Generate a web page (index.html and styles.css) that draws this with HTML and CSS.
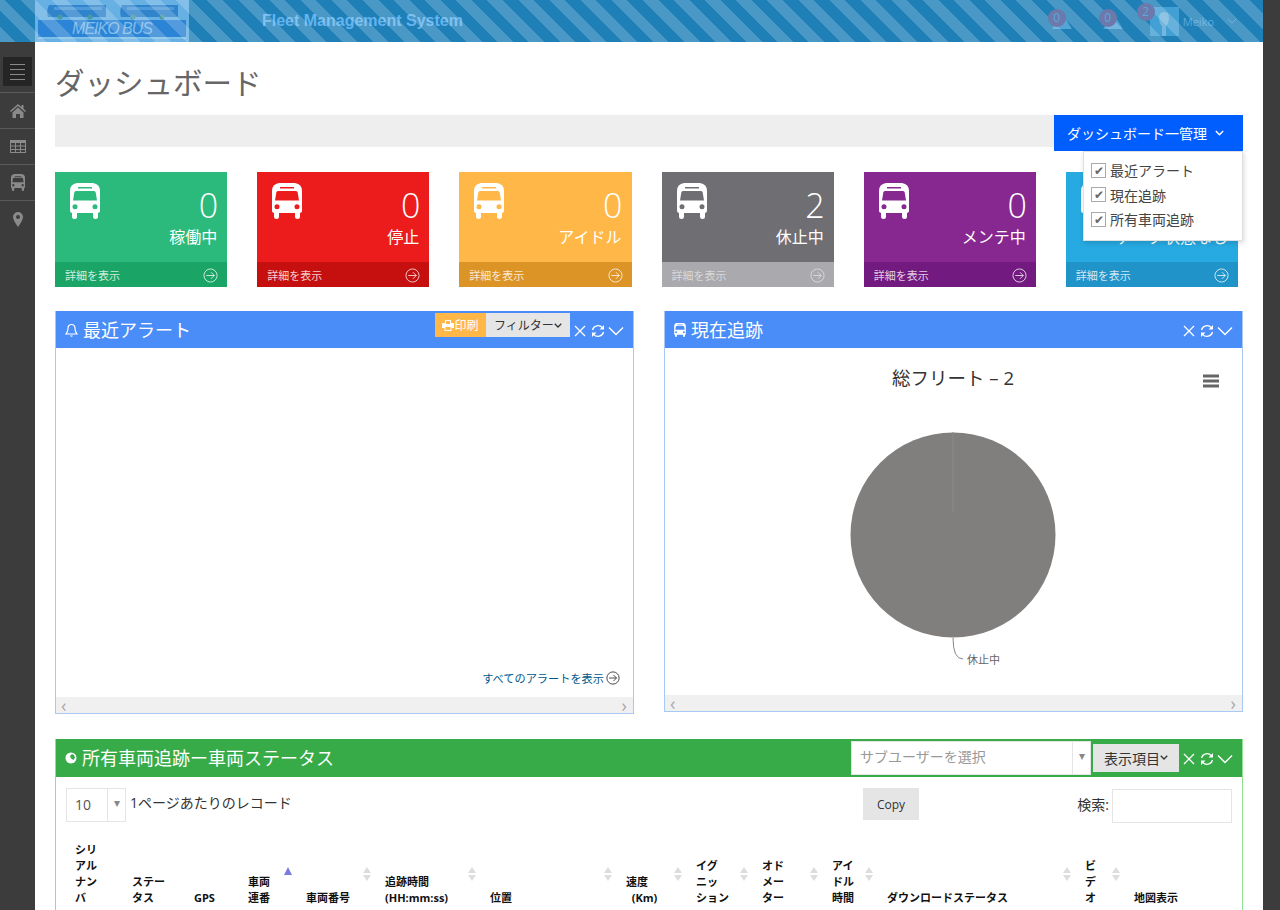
FILE: index.html
```html
<!DOCTYPE html>
<html lang="ja">
<head>
  <meta charset="UTF-8" />
  <title>Fleet Management System</title>
  <link rel="stylesheet" href="styles.css">
</head>
<body>
  <!-- shared icons -->
  <svg class="icon-defs" width="0" height="0">
    <symbol id="i-bus" viewBox="0 0 30 36">
      <path fill-rule="evenodd" d="M7 0h16q7 1 7 8v20q0 1.5-2 2v3.5a2.5 2.5 0 0 1-5 0V30H7v3.5a2.5 2.5 0 0 1-5 0V30q-2-.5-2-2V8q0-7 7-8zM8 4v1.5h14V4zM6 8q-1.500 0-1.700 1.500L3 17.500h24l-1.300-8Q25.500 8 24 8zM5 21.300a2.500 2.500 0 1 0 0 5 2.500 2.500 0 0 0 0-5zM25 21.300a2.500 2.500 0 1 0 0 5 2.500 2.500 0 0 0 0-5z"/>
    </symbol>
    <symbol id="i-go" viewBox="0 0 16 16">
      <circle cx="8" cy="8" r="7" fill="none" stroke="currentColor"/>
      <path d="M3.500 8h8.500M8.500 4.500 12 8l-3.500 3.500" fill="none" stroke="currentColor"/>
    </symbol>
    <symbol id="i-close" viewBox="0 0 14 14">
      <path d="M2 2l10 10M12 2 2 12" fill="none" stroke="currentColor" stroke-width="1.300"/>
    </symbol>
    <symbol id="i-sync" viewBox="0 0 14 14">
      <path d="M1.500 6a5.600 5.600 0 0 1 9.800-2.300M12.500 8a5.600 5.600 0 0 1-9.800 2.300" fill="none" stroke="currentColor" stroke-width="1.300"/>
      <path d="M13 1v4.500H8.500zM1 13V8.500h4.500z" fill="currentColor"/>
    </symbol>
    <symbol id="i-down" viewBox="0 0 16 10">
      <path d="M1 1.500l7 7 7-7" fill="none" stroke="currentColor" stroke-width="1.400"/>
    </symbol>
    <symbol id="i-caret" viewBox="0 0 16 10">
      <path d="M1.500 1.500 8 8l6.500-6.500" fill="none" stroke="currentColor" stroke-width="2.600"/>
    </symbol>
  </svg>

  <header class="topbar">
    <div class="logo">
      <div class="logo-buses">
        <svg width="62" height="16" viewBox="0 0 62 16"><path d="M3 1h57v12H2q-2-6 1-12z" fill="#2f84cc"/><path d="M8 3h48v3H8z" fill="#4f9ad8"/><circle cx="14" cy="13" r="2.500" fill="#4a9a9f"/><circle cx="44" cy="13" r="2.500" fill="#4a9a9f"/></svg>
        <svg width="60" height="16" viewBox="0 0 60 16"><path d="M3 1h56v12H2q-2-6 1-12z" fill="#2f84cc"/><path d="M8 3h47v3H8z" fill="#4f9ad8"/><circle cx="14" cy="13" r="2.500" fill="#4a9a9f"/><circle cx="43" cy="13" r="2.500" fill="#4a9a9f"/></svg>
      </div>
      <div class="logo-band">MEIKO BUS</div>
    </div>
    <div class="system-name">Fleet Management System</div>
    <div class="top-right">
      <div class="notify">
        <span class="badge">0</span>
        <svg width="22" height="18" viewBox="0 0 24 20"><path d="M12 1 23 19H1z" fill="#52a5d6"/></svg>
      </div>
      <div class="notify">
        <span class="badge">0</span>
        <svg width="22" height="18" viewBox="0 0 24 20"><path d="M12 1 23 19H1z" fill="#52a5d6"/></svg>
      </div>
      <div class="user">
        <span class="badge badge-user">2</span>
        <div class="avatar">
          <svg width="14" height="24" viewBox="0 0 14 24"><path d="M7 0q5 0 5 6 0 5-3 8v10H5V14Q2 11 2 6q0-6 5-6z" fill="#76b6dc"/></svg>
        </div>
        <span class="user-name">Meiko</span>
        <svg class="user-caret" width="10" height="6"><use href="#i-down"/></svg>
      </div>
    </div>
  </header>

  <div class="layout">
    <nav class="sidebar">
      <div class="side-toggle-row">
        <div class="side-toggle"><span></span><span></span><span></span><span></span></div>
      </div>
      <div class="side-item">
        <svg width="16" height="14" viewBox="0 0 16 14"><path d="M8 0 0 7l1 1 7-6 7 6 1-1-2.500-2.200V1h-2v2zM2.500 8.500V14H6v-4h4v4h3.500V8.500L8 3.500z" fill="#8a8a8a"/></svg>
      </div>
      <div class="side-item">
        <svg width="16" height="13" viewBox="0 0 16 13"><path fill-rule="evenodd" d="M0 0h16v13H0zM1 3v2.500h4V3zm5 0v2.500h4V3zm5 0v2.500h4V3zM1 6.500V9h4V6.500zm5 0V9h4V6.500zm5 0V9h4V6.500zM1 10v2h4v-2zm5 0v2h4v-2zm5 0v2h4v-2z" fill="#8a8a8a"/></svg>
      </div>
      <div class="side-item">
        <svg class="side-bus" width="14" height="17"><use href="#i-bus"/></svg>
      </div>
      <div class="side-item">
        <svg width="10" height="15" viewBox="0 0 10 15"><path fill-rule="evenodd" d="M5 0a5 5 0 0 1 5 5q0 3-5 10Q0 8 0 5a5 5 0 0 1 5-5zm0 3a2 2 0 1 0 0 4 2 2 0 0 0 0-4z" fill="#8a8a8a"/></svg>
      </div>
    </nav>

    <main class="content">
      <h1 class="page-title">ダッシュボード</h1>

      <div class="toolbar">
        <div class="manage-wrap">
          <button class="manage-btn">ダッシュボード一管理
            <svg width="9" height="6"><use href="#i-caret"/></svg>
          </button>
          <div class="manage-menu">
            <label class="menu-row"><span class="check">✔</span>最近アラート</label>
            <label class="menu-row"><span class="check">✔</span>現在追跡</label>
            <label class="menu-row"><span class="check">✔</span>所有車両追跡</label>
          </div>
        </div>
      </div>

      <section class="stats">
        <div class="stat stat-green">
          <div class="stat-main">
            <svg class="stat-bus" width="30" height="36"><use href="#i-bus"/></svg>
            <div class="stat-text"><div class="stat-num">0</div><div class="stat-label">稼働中</div></div>
          </div>
          <div class="stat-foot"><span>詳細を表示</span><svg width="15" height="15"><use href="#i-go"/></svg></div>
        </div>
        <div class="stat stat-red">
          <div class="stat-main">
            <svg class="stat-bus" width="30" height="36"><use href="#i-bus"/></svg>
            <div class="stat-text"><div class="stat-num">0</div><div class="stat-label">停止</div></div>
          </div>
          <div class="stat-foot"><span>詳細を表示</span><svg width="15" height="15"><use href="#i-go"/></svg></div>
        </div>
        <div class="stat stat-orange">
          <div class="stat-main">
            <svg class="stat-bus" width="30" height="36"><use href="#i-bus"/></svg>
            <div class="stat-text"><div class="stat-num">0</div><div class="stat-label">アイドル</div></div>
          </div>
          <div class="stat-foot"><span>詳細を表示</span><svg width="15" height="15"><use href="#i-go"/></svg></div>
        </div>
        <div class="stat stat-gray">
          <div class="stat-main">
            <svg class="stat-bus" width="30" height="36"><use href="#i-bus"/></svg>
            <div class="stat-text"><div class="stat-num">2</div><div class="stat-label">休止中</div></div>
          </div>
          <div class="stat-foot"><span>詳細を表示</span><svg width="15" height="15"><use href="#i-go"/></svg></div>
        </div>
        <div class="stat stat-purple">
          <div class="stat-main">
            <svg class="stat-bus" width="30" height="36"><use href="#i-bus"/></svg>
            <div class="stat-text"><div class="stat-num">0</div><div class="stat-label">メンテ中</div></div>
          </div>
          <div class="stat-foot"><span>詳細を表示</span><svg width="15" height="15"><use href="#i-go"/></svg></div>
        </div>
        <div class="stat stat-blue">
          <div class="stat-main">
            <svg class="stat-bus" width="30" height="36"><use href="#i-bus"/></svg>
            <div class="stat-text"><div class="stat-num">0</div><div class="stat-label">データ状態なし</div></div>
          </div>
          <div class="stat-foot"><span>詳細を表示</span><svg width="15" height="15"><use href="#i-go"/></svg></div>
        </div>
      </section>

      <section class="panel-row">
        <div class="panel panel-blue panel-alerts">
          <div class="panel-head">
            <svg class="head-icon" width="13" height="14" viewBox="0 0 13 14"><path d="M6.500 1.500q3.500 0 3.500 4 0 3 2 5.500H1q2-2.500 2-5.500 0-4 3.500-4z" fill="none" stroke="#fff" stroke-width="1.200"/><path d="M5 12.500h3q-.5 1.200-1.500 1.200T5 12.500z" fill="#fff"/></svg>
            <span class="panel-title">最近アラート</span>
            <div class="head-tools">
              <button class="btn-print">
                <svg width="12" height="11" viewBox="0 0 12 11"><path fill-rule="evenodd" d="M3 0h6v3h2q1 0 1 1v4H9.500v3h-7V8H0V4q0-1 1-1h2zm1 1v3h4V1zM3.500 7v3h5V7z" fill="#fff"/></svg>印刷</button>
              <button class="btn-gray btn-filter">フィルター<svg width="8" height="5"><use href="#i-caret"/></svg></button>
            </div>
            <div class="head-icons">
              <svg width="14" height="14"><use href="#i-close"/></svg>
              <svg width="14" height="14"><use href="#i-sync"/></svg>
              <svg width="16" height="10"><use href="#i-down"/></svg>
            </div>
          </div>
          <div class="panel-body alerts-body">
            <a class="all-alerts">すべてのアラートを表示<svg width="14" height="14"><use href="#i-go"/></svg></a>
          </div>
          <div class="hscroll"><span>‹</span><span>›</span></div>
        </div>

        <div class="panel panel-blue panel-track">
          <div class="panel-head">
            <svg class="head-icon" width="12" height="14"><use href="#i-bus"/></svg>
            <span class="panel-title">現在追跡</span>
            <div class="head-icons">
              <svg width="14" height="14"><use href="#i-close"/></svg>
              <svg width="14" height="14"><use href="#i-sync"/></svg>
              <svg width="16" height="10"><use href="#i-down"/></svg>
            </div>
          </div>
          <div class="panel-body chart-body">
            <svg class="pie" width="576" height="345" viewBox="0 0 576 345">
              <text x="288" y="37" text-anchor="middle" class="pie-title">総フリート – 2</text>
              <path d="M538 28h16M538 33h16M538 38h16" stroke="#666" stroke-width="3"/>
              <circle cx="288" cy="187" r="102.500" fill="#807f7d"/>
              <path d="M288 84v80" stroke="#8c8b89" stroke-width="1"/>
              <path d="M288 290q0 21 10 21" fill="none" stroke="#888"/>
              <text x="302" y="316" class="pie-label">休止中</text>
            </svg>
          </div>
          <div class="hscroll"><span>‹</span><span>›</span></div>
        </div>
      </section>

      <section class="panel panel-green">
        <div class="panel-head">
          <svg class="head-icon" width="12" height="12" viewBox="0 0 12 12"><path fill-rule="evenodd" d="M6 .5a5.500 5.500 0 1 1 0 11 5.500 5.500 0 0 1 0-11zM7 2 5 4l1 2.500L8.500 8 10 5.500 9 3z" fill="#fff"/></svg>
          <span class="panel-title">所有車両追跡ー車両ステータス</span>
          <div class="head-tools tools-fleet">
            <div class="subuser"><span class="subuser-text">サブユーザーを選択</span><span class="select-arrow">▾</span></div>
            <button class="btn-gray btn-columns">表示項目<svg width="8" height="5"><use href="#i-caret"/></svg></button>
          </div>
          <div class="head-icons">
            <svg width="14" height="14"><use href="#i-close"/></svg>
            <svg width="14" height="14"><use href="#i-sync"/></svg>
            <svg width="16" height="10"><use href="#i-down"/></svg>
          </div>
        </div>
        <div class="fleet-body">
          <div class="table-controls">
            <div class="length">
              <div class="length-select"><span class="length-val">10</span><span class="select-arrow">▾</span></div>
              <span>1ページあたりのレコード</span>
            </div>
            <button class="btn-copy">Copy</button>
            <div class="search"><span>検索:</span><div class="search-box"></div></div>
          </div>
          <table class="fleet-table">
            <colgroup>
              <col><col><col><col><col><col><col><col><col><col><col><col><col><col>
            </colgroup>
            <thead>
              <tr>
                <th>シリ<br>アル<br>ナン<br>バ</th>
                <th>ステー<br>タス</th>
                <th>GPS</th>
                <th class="sort sort-asc">車両<br>連番</th>
                <th class="sort">車両番号</th>
                <th class="sort">追跡時間<br>(HH:mm:ss)</th>
                <th class="sort">位置</th>
                <th class="sort">速度<br>&nbsp;&nbsp;(Km)</th>
                <th class="sort">イグ<br>ニッ<br>ション</th>
                <th class="sort">オド<br>メー<br>ター</th>
                <th class="sort">アイ<br>ドル<br>時間</th>
                <th class="sort">ダウンロードステータス</th>
                <th class="sort">ビ<br>デ<br>オ</th>
                <th>地図表示</th>
              </tr>
            </thead>
          </table>
        </div>
      </section>
    </main>
  </div>
</body>
</html>
```

FILE: styles.css
```css
* {
  box-sizing: border-box;
}

html, body {
  height: 910px;
  overflow: hidden;
}

body {
  margin: 0;
  padding-right: 17px;
  background-color: #3c3c3c;
  font-family: "Open Sans", "Noto Sans CJK JP", sans-serif;
  font-size: 14px;
  color: #333;
}

.icon-defs {
  position: absolute;
}

button {
  font-family: inherit;
  border: none;
  cursor: pointer;
}

/* top bar, greyed by a striped loading layer */
.topbar {
  position: relative;
  display: flex;
  align-items: center;
  height: 42px;
  padding-left: 35px;
  background-color: #1f80b8;
}

.topbar::after {
  content: "";
  position: absolute;
  inset: 0;
  background: repeating-linear-gradient(45deg, rgba(255, 255, 255, 0.19) 0 11px, transparent 11px 22px);
}

.logo {
  width: 154px;
  height: 42px;
  padding: 4px 3px 0;
  background-color: #67b0e4;
}

.logo-buses {
  display: flex;
  justify-content: space-between;
  height: 16px;
  padding: 0 7px 0 8px;
}

.logo-band {
  height: 19px;
  border-bottom: 2px solid #7ec0e8;
  background-color: #2c84d6;
  color: #7fbdea;
  font-family: "Liberation Sans", sans-serif;
  font-size: 16px;
  font-style: italic;
  letter-spacing: -1px;
  line-height: 17px;
  text-align: center;
}

.system-name {
  margin-left: 73px;
  color: #63b4ee;
  font-family: "Liberation Sans", sans-serif;
  font-size: 16px;
  font-weight: bold;
}

.top-right {
  display: flex;
  align-items: center;
  margin-left: auto;
  padding-right: 26px;
  gap: 24px;
}

.notify {
  position: relative;
  width: 27px;
  height: 42px;
  padding: 12px 0 0 3px;
}

.badge {
  position: absolute;
  top: 9px;
  left: 0;
  width: 18px;
  height: 18px;
  border-radius: 50%;
  background-color: #6d78ab;
  color: #5aa8dc;
  font-size: 12px;
  line-height: 18px;
  text-align: center;
  z-index: 1;
}

.badge-user {
  top: 3px;
  left: -13px;
}

.user {
  position: relative;
  display: flex;
  align-items: center;
  height: 42px;
}

.avatar {
  display: flex;
  align-items: flex-end;
  justify-content: center;
  width: 29px;
  height: 29px;
  background-color: #42a0d4;
}

.user-name {
  margin-left: 4px;
  color: #5aa8dc;
  font-size: 11px;
}

.user-caret {
  margin-left: 13px;
  color: #5aa8dc;
}

.layout {
  display: flex;
  height: 868px;
}

/* left icon rail */
.sidebar {
  flex: 0 0 35px;
  background-color: #3c3c3c;
}

.side-toggle-row {
  height: 51px;
  padding: 15px 3px 0;
  border-bottom: 1px solid #5a5a5a;
}

.side-toggle {
  display: flex;
  flex-direction: column;
  justify-content: center;
  gap: 4px;
  height: 29px;
  padding: 0 7px;
  background-color: #252525;
}

.side-toggle span {
  height: 1px;
  background-color: #8a8a8a;
}

.side-item {
  display: flex;
  align-items: center;
  justify-content: center;
  height: 36px;
  border-bottom: 1px solid #5a5a5a;
}

.side-item:last-child {
  border-bottom: none;
}

.side-bus {
  fill: #8a8a8a;
}

.content {
  flex: 1;
  padding: 0 20px;
  background-color: #fff;
  overflow: hidden;
}

.page-title {
  height: 73px;
  margin: 0;
  padding-top: 20px;
  color: #666;
  font-size: 29.500px;
  font-weight: 400;
  line-height: 42px;
}

.toolbar {
  display: flex;
  justify-content: flex-end;
  height: 32px;
  background-color: #eee;
}

.manage-wrap {
  position: relative;
  z-index: 2;
}

.manage-btn {
  display: flex;
  align-items: center;
  gap: 7px;
  width: 189px;
  height: 36px;
  padding: 0 0 0 13px;
  background-color: #005eff;
  color: #fff;
  font-size: 14px;
}

.manage-btn svg {
  margin-left: 1px;
}

.manage-menu {
  position: absolute;
  top: 36px;
  right: 0;
  width: 160px;
  height: 90px;
  padding: 6px 0 0 7px;
  background-color: #fff;
  border: 1px solid #e0e0e0;
  box-shadow: 1px 2px 5px rgba(0, 0, 0, 0.15);
}

.menu-row {
  display: flex;
  align-items: center;
  height: 24.500px;
  color: #444;
  font-size: 14px;
}

.check {
  width: 15px;
  height: 15px;
  margin-right: 4px;
  border: 1px solid #aaa;
  color: #666;
  font-size: 12px;
  line-height: 13px;
  text-align: center;
}

/* status cards */
.stats {
  display: grid;
  grid-template-columns: repeat(6, 1fr);
  gap: 30px;
  margin-top: 25px;
  padding-right: 5px;
}

.stat {
  height: 115px;
  color: #fff;
}

.stat-main {
  display: flex;
  justify-content: space-between;
  height: 90px;
  padding: 11px 10px 0 15px;
}

.stat-bus {
  fill: #fff;
}

.stat-text {
  text-align: right;
}

.stat-num {
  height: 42px;
  margin-right: -1px;
  font-size: 34px;
  font-weight: 300;
  line-height: 44px;
}

.stat-label {
  font-size: 16px;
  line-height: 24px;
  white-space: nowrap;
}

.stat-foot {
  display: flex;
  align-items: center;
  justify-content: space-between;
  height: 25px;
  padding: 1px 9px 0 10px;
  font-size: 11px;
  color: rgba(255, 255, 255, 0.8);
}

.stat-green { background-color: #2bba7b; }
.stat-green .stat-foot { background-color: #1aa567; }
.stat-red { background-color: #ec1c1c; }
.stat-red .stat-foot { background-color: #c60f0f; }
.stat-orange { background-color: #ffb848; }
.stat-orange .stat-foot { background-color: #dd9426; }
.stat-gray { background-color: #6f6e72; }
.stat-gray .stat-foot { background-color: #aaa9ad; color: rgba(255, 255, 255, 0.55); }
.stat-purple { background-color: #86288f; }
.stat-purple .stat-foot { background-color: #721a80; }
.stat-blue { background-color: #27a9e1; }
.stat-blue .stat-foot { background-color: #2093c8; }

/* panels */
.panel-row {
  display: flex;
  align-items: flex-start;
  gap: 30px;
  margin-top: 24px;
}

.panel {
  border-style: solid;
  border-width: 1px;
}

.panel-blue {
  width: 579px;
  border-color: #a9c9f5;
}

.panel-green {
  margin-top: 25px;
  border-color: #8fe08f;
}

.panel-head {
  display: flex;
  align-items: center;
  height: 37px;
  padding: 0 9px 0 8px;
  margin-top: -1px;
  color: #fff;
}

.panel-blue .panel-head {
  background-color: #4a8df8;
}

.panel-green .panel-head {
  height: 38px;
  background-color: #37ab48;
}

.head-icon {
  margin-left: 1px;
  fill: #fff;
}

.panel-title {
  margin-left: 5px;
  font-size: 18px;
  line-height: 36px;
}

.head-tools {
  display: flex;
  align-items: flex-start;
  height: 37px;
  margin-left: auto;
  padding-top: 2px;
}

.btn-print {
  display: flex;
  align-items: center;
  justify-content: center;
  width: 51px;
  height: 24px;
  padding: 0;
  background-color: #ffb848;
  color: #fff;
  font-size: 12px;
}

.btn-gray {
  display: flex;
  align-items: center;
  justify-content: center;
  background-color: #e5e5e5;
  color: #333;
}

.btn-filter {
  width: 84px;
  height: 24px;
  padding: 0;
  font-size: 12px;
}

.head-icons {
  display: flex;
  align-items: center;
  gap: 3.500px;
  margin-top: 2px;
  margin-left: 3px;
}

.panel-track .head-icons {
  margin-left: auto;
}

.alerts-body {
  position: relative;
  height: 349px;
}

.all-alerts {
  position: absolute;
  right: 13px;
  bottom: 11px;
  display: flex;
  align-items: center;
  gap: 2px;
  color: #005a8c;
  font-size: 11.200px;
}

.all-alerts svg {
  color: #333;
}

.chart-body {
  height: 347px;
}

.pie {
  display: block;
}

.pie-title {
  fill: #333;
  font-size: 18.500px;
}

.pie-label {
  fill: #666;
  font-size: 11px;
}

.hscroll {
  display: flex;
  justify-content: space-between;
  align-items: center;
  height: 16px;
  padding: 0 6px 0 5px;
  background-color: #f0f0f0;
  color: #aaa;
  font-size: 18px;
  line-height: 16px;
}

.tools-fleet {
  padding-top: 1px;
}

.subuser {
  display: flex;
  width: 240px;
  height: 34px;
  background-color: #fff;
  border: 1px solid #e5e5e5;
}

.subuser-text {
  flex: 1;
  padding-left: 8px;
  color: #999;
  font-size: 14px;
  line-height: 30px;
}

.select-arrow {
  width: 18px;
  border-left: 1px solid #e5e5e5;
  color: #888;
  font-size: 12px;
  line-height: 28px;
  text-align: center;
}

.btn-columns {
  width: 86px;
  height: 28px;
  margin: 3px 0 0 2px;
  padding: 0;
  font-size: 14px;
}

.fleet-body {
  height: 240px;
  padding: 11px 10px 0;
}

.table-controls {
  display: grid;
  grid-template-columns: 797px 56px 1fr;
  height: 48px;
}

.length {
  display: flex;
  align-items: flex-start;
  gap: 4px;
  line-height: 30px;
}

.length-select {
  display: flex;
  width: 60px;
  height: 34px;
  border: 1px solid #e5e5e5;
}

.length-val {
  flex: 1;
  padding-left: 8px;
  color: #555;
  line-height: 32px;
}

.btn-copy {
  height: 32px;
  padding: 0;
  background-color: #e5e5e5;
  color: #333;
  font-size: 12px;
}

.search {
  display: flex;
  justify-content: flex-end;
  gap: 3px;
  padding-top: 1px;
  line-height: 32px;
}

.search-box {
  width: 120px;
  height: 34px;
  border: 1px solid #e5e5e5;
}

.fleet-table {
  width: 1156px;
  table-layout: fixed;
  border-collapse: collapse;
}

.fleet-table col:nth-child(1) { width: 57px; }
.fleet-table col:nth-child(2) { width: 62px; }
.fleet-table col:nth-child(3) { width: 54px; }
.fleet-table col:nth-child(4) { width: 58px; }
.fleet-table col:nth-child(5) { width: 79px; }
.fleet-table col:nth-child(6) { width: 105px; }
.fleet-table col:nth-child(7) { width: 136px; }
.fleet-table col:nth-child(8) { width: 70px; }
.fleet-table col:nth-child(9) { width: 66px; }
.fleet-table col:nth-child(10) { width: 70px; }
.fleet-table col:nth-child(11) { width: 55px; }
.fleet-table col:nth-child(12) { width: 198px; }
.fleet-table col:nth-child(13) { width: 49px; }
.fleet-table col:nth-child(14) { width: 97px; }

.fleet-table th {
  position: relative;
  height: 70px;
  padding: 0 0 0 9px;
  color: #111;
  font-size: 11px;
  font-weight: bold;
  line-height: 16px;
  text-align: left;
  vertical-align: bottom;
  white-space: nowrap;
}

/* sort arrows */
.sort::before,
.sort::after {
  content: "";
  position: absolute;
  right: 5px;
  border-left: 4.500px solid transparent;
  border-right: 4.500px solid transparent;
}

.sort::before {
  bottom: 33px;
  border-bottom: 6px solid #ddd;
}

.sort::after {
  bottom: 25px;
  border-top: 6px solid #ddd;
}

.sort-asc::before {
  bottom: 31px;
  border-bottom: 8px solid #7c7ce0;
}

.sort-asc::after {
  display: none;
}
```
